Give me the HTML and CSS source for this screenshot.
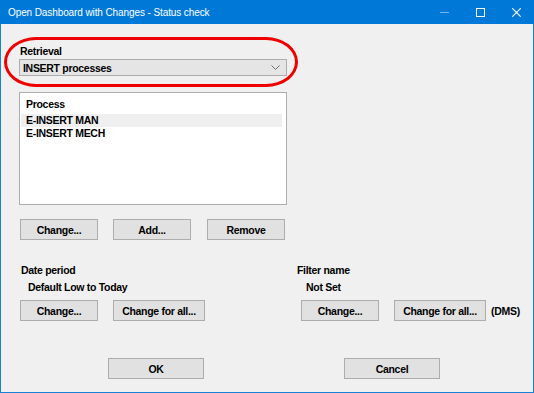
FILE: index.html
```html
<!DOCTYPE html>
<html lang="en">
<head>
  <meta charset="UTF-8">
  <title>Open Dashboard with Changes - Status check</title>
  <link rel="stylesheet" href="styles.css">
</head>
<body>
  <div class="window">
    <div class="titlebar">
      <span class="title">Open Dashboard with Changes - Status check</span>
      <div class="controls">
        <span class="ctl">
          <svg width="9" height="9" viewBox="0 0 9 9"><path d="M0 4.5h9" stroke="#fff" stroke-width="1" opacity="0.45"/></svg>
        </span>
        <span class="ctl">
          <svg width="9" height="9" viewBox="0 0 9 9"><rect x="0.5" y="0.5" width="8" height="8" fill="none" stroke="#fff" stroke-width="1"/></svg>
        </span>
        <span class="ctl">
          <svg width="9" height="9" viewBox="0 0 9 9"><path d="M0.3 0.3L8.7 8.7M8.7 0.3L0.3 8.7" stroke="#fff" stroke-width="1.1"/></svg>
        </span>
      </div>
    </div>

    <div class="content">
      <!-- annotation round the retrieval combo -->
      <div class="highlight"></div>

      <div class="field">
        <div class="label">Retrieval</div>
        <div class="combo">
          <span>INSERT processes</span>
          <svg width="9" height="6" viewBox="0 0 9 6"><path d="M0.5 0.5L4.5 4.5L8.5 0.5" fill="none" stroke="#6d6d6d" stroke-width="1"/></svg>
        </div>
      </div>

      <div class="listbox">
        <div class="list-head">Process</div>
        <div class="list-row selected">E-INSERT MAN</div>
        <div class="list-row">E-INSERT MECH</div>
      </div>

      <div class="button-row">
        <button class="btn">Change...</button>
        <button class="btn">Add...</button>
        <button class="btn">Remove</button>
      </div>

      <div class="columns">
        <div class="col col-left">
          <div class="label">Date period</div>
          <div class="value">Default Low to Today</div>
          <div class="col-buttons">
            <button class="btn">Change...</button>
            <button class="btn wide">Change for all...</button>
          </div>
        </div>
        <div class="col col-right">
          <div class="label">Filter name</div>
          <div class="value">Not Set</div>
          <div class="col-buttons">
            <button class="btn">Change...</button>
            <button class="btn wide">Change for all...</button>
            <span class="note">(DMS)</span>
          </div>
        </div>
      </div>

      <div class="footer">
        <button class="btn big">OK</button>
        <button class="btn big">Cancel</button>
      </div>
    </div>
  </div>
</body>
</html>
```

FILE: styles.css
```css
html, body {
  margin: 0; padding: 0;
}
body {
  font-family: "Liberation Sans", Arial, sans-serif;
  font-size: 10.5px;
  font-weight: bold;
  letter-spacing: -0.3px;
  color: #000;
  background: #f0f0f0;
}
.window {
  width: 534px;
  height: 393px;
  box-sizing: border-box;
  border: 1px solid #1a82d6;
  border-top: none;
  background: #f0f0f0;
  display: flex;
  flex-direction: column;
}
.titlebar {
  height: 24px;
  margin: 0 -1px;
  background: #0078d7;
  color: #fff;
  display: flex;
  align-items: center;
  justify-content: space-between;
  padding-left: 8px;
}
.title {
  font-weight: normal;
  font-size: 10px;
  letter-spacing: -0.1px;
}
.controls {
  display: flex;
  height: 24px;
}
.ctl {
  width: 36px;
  display: flex;
  align-items: center;
  justify-content: center;
}
.content {
  position: relative;
  flex: 1;
  padding: 0 0 0 18px;
}
.highlight {
  position: absolute;
  left: 3px;
  top: 13px;
  width: 288px;
  height: 44px;
  border: 3px solid #ee0000;
  border-radius: 32px / 25px;
  pointer-events: none;
}
.label {
  height: 13px;
  line-height: 13px;
  padding-left: 1px;
}
.field {
  margin-top: 21px;
}
.combo {
  margin-top: 1px;
  width: 268px;
  height: 17px;
  box-sizing: border-box;
  border: 1px solid #adadad;
  background: #e5e5e5;
  display: flex;
  align-items: center;
  justify-content: space-between;
  padding: 0 6px 0 3px;
}
.listbox {
  margin-top: 16px;
  width: 268px;
  height: 113px;
  box-sizing: border-box;
  border: 1px solid #adadad;
  background: #fff;
  padding: 4px 4px 0 1px;
}
.list-head {
  height: 14px;
  line-height: 14px;
  padding-left: 5px;
  margin-bottom: 3px;
}
.list-row {
  height: 13px;
  line-height: 13px;
  padding-left: 5px;
}
.list-row.selected {
  background: #efefef;
}
.button-row {
  margin-top: 14px;
  display: flex;
  gap: 15px;
  padding-left: 1px;
}
.button-row .btn + .btn + .btn {
  margin-left: 1px;
}
.btn {
  font-family: inherit;
  font-size: inherit;
  font-weight: bold;
  letter-spacing: inherit;
  color: #000;
  width: 78px;
  height: 21px;
  padding: 0;
  background: #e1e1e1;
  border: 1px solid #adadad;
  border-radius: 0;
}
.btn.wide {
  width: 92px;
}
.btn.big {
  width: 96px;
}
.columns {
  margin-top: 24px;
  display: flex;
}
.col-left {
  width: 276px;
  padding-left: 1px;
}
.value {
  margin-top: 4px;
  height: 13px;
  line-height: 13px;
  padding-left: 8px;
}
.col-right .value {
  padding-left: 10px;
}
.col-buttons {
  margin-top: 6px;
  display: flex;
  align-items: center;
  gap: 15px;
}
.col-right .col-buttons {
  padding-left: 5px;
}
.note {
  margin-left: -10px;
}
.footer {
  margin-top: 37px;
  display: flex;
  gap: 140px;
  padding-left: 89px;
}
```
